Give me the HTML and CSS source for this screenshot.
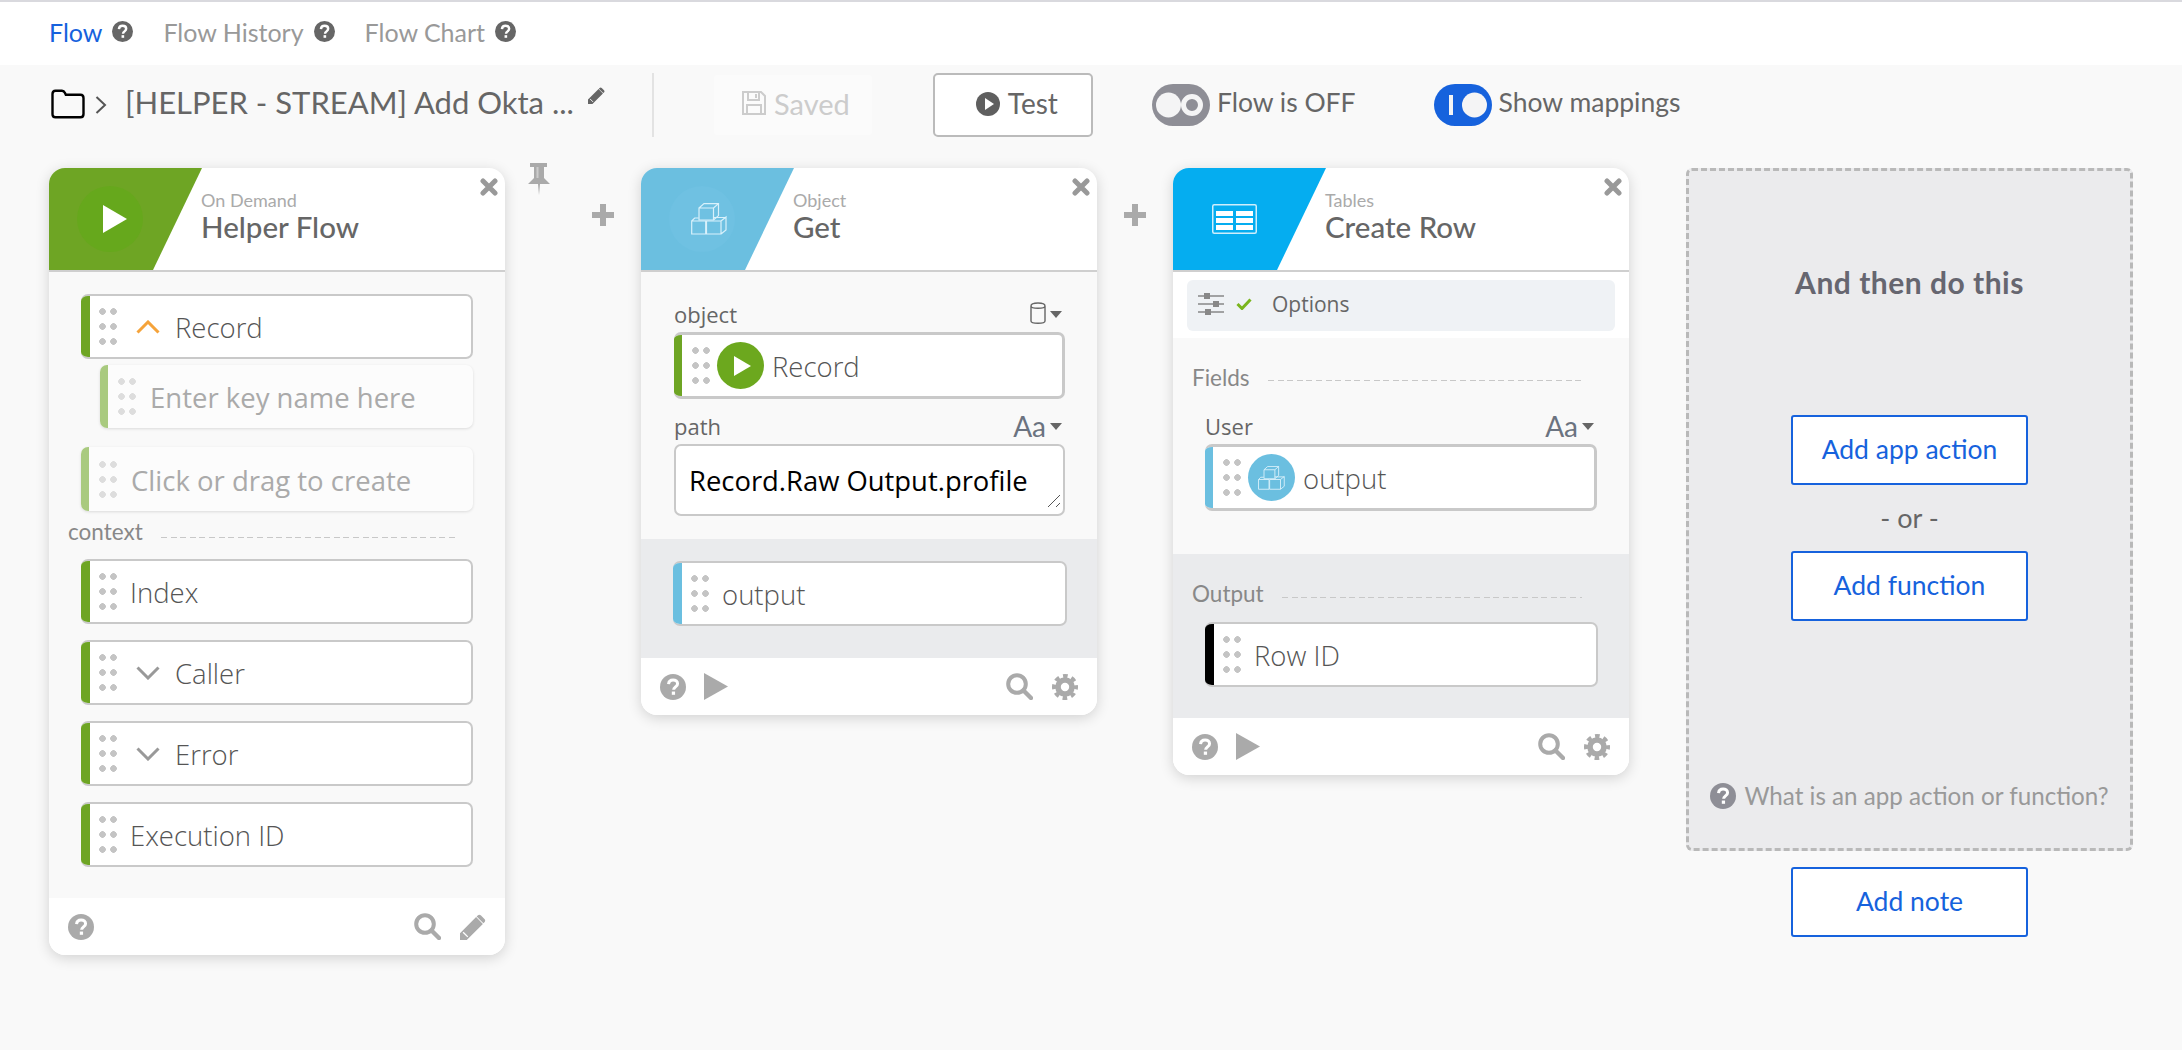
FILE: index.html
```html
<!DOCTYPE html>
<html lang="en">
<head>
<meta charset="UTF-8">
<meta name="viewport" content="width=device-width, initial-scale=1.0">
<title>Flow</title>
<link rel="stylesheet" href="styles.css">
</head>
<body>
<svg class="sprite" xmlns="http://www.w3.org/2000/svg">
    <symbol id="i-help" viewBox="0 0 24 24">
        <circle cx="12" cy="12" r="12" fill="currentColor"/>
        <path d="M7.900 9.300c.2-2.400 1.900-3.800 4.200-3.800 2.400 0 4.100 1.400 4.100 3.400 0 3-3.600 2.900-3.600 5.600" fill="none" stroke="#fff" stroke-width="2.800"/>
        <rect x="10.900" y="16.200" width="3" height="3" fill="#fff"/>
    </symbol>
    <symbol id="i-search" viewBox="0 0 27 27">
        <circle cx="11" cy="11" r="8.800" fill="none" stroke="currentColor" stroke-width="4"/>
        <path d="M17.500 17.500l7.500 7.500" stroke="currentColor" stroke-width="4.400" stroke-linecap="round"/>
    </symbol>
    <symbol id="i-pencil" viewBox="0 0 25 25">
        <path d="M0 25v-6.500L15.500 3l6.500 6.500L6.500 25zM17 1.500c1-1 2.200-1 3.200 0l3.300 3.300c1 1 1 2.200 0 3.200l-1 1-6.500-6.500z" fill="currentColor"/>
        <path d="M3 17.500l4.500 4.500" stroke="#fff" stroke-width="1.300"/>
    </symbol>
    <symbol id="i-gear" viewBox="0 0 26 26">
        <circle cx="13" cy="13" r="7" fill="none" stroke="currentColor" stroke-width="5.600"/>
        <circle cx="13" cy="13" r="11" fill="none" stroke="currentColor" stroke-width="4" stroke-dasharray="4.600 4.040" stroke-dashoffset="2.300"/>
    </symbol>
    <symbol id="i-close" viewBox="0 0 18 18">
        <path d="M3 3l12 12M15 3L3 15" stroke="currentColor" stroke-width="5" stroke-linecap="round"/>
    </symbol>
    <symbol id="i-cubes" viewBox="0 0 36 32">
        <path d="M8 5h14.500v12H8zM8 5l5-4.400h14.500v12l-5 4.400M22.500 5l5-4.400" fill="none" stroke="currentColor" stroke-width="1.200"/>
        <path d="M.7 18h14v13H.7zM15.500 18H30v13H15.500zM30 18l5-4v13l-5 4M.7 18l3-3h4M22.500 14.500H35" fill="none" stroke="currentColor" stroke-width="1.200"/>
    </symbol>
</svg>

<nav class="tabs">
    <a class="tab tab-active">Flow <svg class="tab-help"><use href="#i-help"/></svg></a>
    <a class="tab">Flow History <svg class="tab-help"><use href="#i-help"/></svg></a>
    <a class="tab">Flow Chart <svg class="tab-help"><use href="#i-help"/></svg></a>
</nav>

<header class="toolbar">
    <svg class="folder" viewBox="0 0 34 30"><path d="M1.500 5c0-2 1-3.300 3-3.300h6.500c1.500 0 2.300.8 3 2.300l.8 1.700h14.700c2 0 3 1.300 3 3.300V25c0 2-1 3.300-3 3.300h-25c-2 0-3-1.300-3-3.300z" fill="none" stroke="#000" stroke-width="2.400"/></svg>
    <svg class="crumb" viewBox="0 0 12 20"><path d="M1.500 2l8.500 8-8.500 8" fill="none" stroke="#555" stroke-width="2"/></svg>
    <h1 class="flow-name">[HELPER - STREAM] Add Okta ...</h1>
    <svg class="name-edit"><use href="#i-pencil"/></svg>
    <div class="divider"></div>
    <div class="saved">
        <svg class="floppy" viewBox="0 0 24 24"><path d="M1 1h18l4 4v18H1zM6 1v8h11V1M14 3v4M5 23v-9h14v9" fill="none" stroke="#ccc" stroke-width="2"/></svg>
        Saved
    </div>
    <button class="test-btn">
        <svg class="test-icon" viewBox="0 0 24 24"><circle cx="12" cy="12" r="12" fill="#5f5f5f"/><path d="M9 6l9 6-9 6z" fill="#fff"/></svg>
        Test
    </button>
    <div class="toggle toggle-off">
        <svg class="toggle-pill" viewBox="0 0 58 42"><rect width="58" height="42" rx="21" fill="#8e8e96"/><circle cx="16.500" cy="21" r="12.500" fill="#f4f4f5"/><circle cx="40" cy="21" r="8.500" fill="none" stroke="#f4f4f5" stroke-width="5"/></svg>
        <span>Flow is OFF</span>
    </div>
    <div class="toggle toggle-on">
        <svg class="toggle-pill" viewBox="0 0 58 42"><rect width="58" height="42" rx="21" fill="#1662dd"/><rect x="15" y="11" width="4" height="20" fill="#f4f4f5"/><circle cx="40.500" cy="21" r="12.500" fill="#f4f4f5"/></svg>
        <span>Show mappings</span>
    </div>
</header>

<main class="canvas">
    <!-- trigger card -->
    <section class="card card-trigger">
        <div class="card-head">
            <div class="accent accent-green">
                <span class="accent-disc disc-green">
                    <svg class="accent-play" viewBox="0 0 24 28"><path d="M0 0l24 14L0 28z" fill="#fff"/></svg>
                </span>
            </div>
            <div class="head-text">
                <div class="head-app">On Demand</div>
                <div class="head-title">Helper Flow</div>
            </div>
            <svg class="close"><use href="#i-close"/></svg>
        </div>
        <div class="card-body body-trigger">
            <div class="row"><span class="bar bar-green"></span><span class="grip"></span>
                <svg class="chev chev-up" viewBox="0 0 24 14"><path d="M1.500 12.500L12 2l10.500 10.500" fill="none" stroke="#f5a33a" stroke-width="3"/></svg>
                <span class="row-label">Record</span>
            </div>
            <div class="row row-ghost row-key"><span class="bar bar-lime"></span><span class="grip"></span><span class="row-label">Enter key name here</span></div>
            <div class="row row-ghost row-create"><span class="bar bar-lime"></span><span class="grip"></span><span class="row-label">Click or drag to create</span></div>
            <div class="sect sect-context"><span>context</span><i class="dash"></i></div>
            <div class="row"><span class="bar bar-green"></span><span class="grip"></span><span class="row-label">Index</span></div>
            <div class="row row-next"><span class="bar bar-green"></span><span class="grip"></span>
                <svg class="chev" viewBox="0 0 24 14"><path d="M1.500 1.500L12 12 22.500 1.500" fill="none" stroke="#999" stroke-width="3"/></svg>
                <span class="row-label">Caller</span>
            </div>
            <div class="row row-next"><span class="bar bar-green"></span><span class="grip"></span>
                <svg class="chev" viewBox="0 0 24 14"><path d="M1.500 1.500L12 12 22.500 1.500" fill="none" stroke="#999" stroke-width="3"/></svg>
                <span class="row-label">Error</span>
            </div>
            <div class="row row-next"><span class="bar bar-green"></span><span class="grip"></span><span class="row-label">Execution ID</span></div>
        </div>
        <div class="card-foot">
            <svg class="foot-icon"><use href="#i-help"/></svg>
            <span class="foot-space"></span>
            <svg class="foot-icon foot-search"><use href="#i-search"/></svg>
            <svg class="foot-icon"><use href="#i-pencil"/></svg>
        </div>
    </section>

    <div class="gutter gutter-first">
        <svg class="pin" viewBox="0 0 22 32"><path d="M2 0h17v4h-3v11l6 6H12l-1 11-1-11H0l6-6V4H2z" fill="#aaa"/><path d="M8.500 4h2v11h-2z" fill="#ccc"/></svg>
        <span class="plus"></span>
    </div>

    <!-- object get -->
    <section class="card">
        <div class="card-head">
            <div class="accent accent-sky">
                <span class="accent-disc disc-sky"><svg class="accent-cubes"><use href="#i-cubes"/></svg></span>
            </div>
            <div class="head-text">
                <div class="head-app">Object</div>
                <div class="head-title">Get</div>
            </div>
            <svg class="close"><use href="#i-close"/></svg>
        </div>
        <div class="card-body body-fields">
            <div class="field-head">
                <span>object</span>
                <span class="type-pick">
                    <svg class="db" viewBox="0 0 16 22"><path d="M1 4c0-4 14-4 14 0v15c0 3-14 3-14 0zM1 4c0 3 14 3 14 0" fill="none" stroke="#666" stroke-width="1.400"/></svg>
                    <i class="caret"></i>
                </span>
            </div>
            <div class="row row-mapped"><span class="bar bar-green"></span><span class="grip"></span>
                <span class="token token-green"><svg class="token-play" viewBox="0 0 17 20"><path d="M0 0l17 10L0 20z" fill="#fff"/></svg></span>
                <span class="row-label">Record</span>
            </div>
            <div class="field-head field-next">
                <span>path</span>
                <span class="type-pick"><span class="aa">Aa</span><i class="caret"></i></span>
            </div>
            <div class="textbox">Record.Raw Output.profile
                <svg class="resize" viewBox="0 0 14 14"><path d="M1 13L13 1M9 13l4-4" stroke="#555" stroke-width="1"/></svg>
            </div>
        </div>
        <div class="card-output output-get">
            <div class="row row-wide"><span class="bar bar-sky"></span><span class="grip"></span><span class="row-label">output</span></div>
        </div>
        <div class="card-foot">
            <svg class="foot-icon"><use href="#i-help"/></svg>
            <svg class="foot-play" viewBox="0 0 24 27"><path d="M0 0l24 13.500L0 27z" fill="#aaa"/></svg>
            <span class="foot-space"></span>
            <svg class="foot-icon foot-search"><use href="#i-search"/></svg>
            <svg class="foot-icon"><use href="#i-gear"/></svg>
        </div>
    </section>

    <div class="gutter gutter-second"><span class="plus"></span></div>

    <!-- tables create row -->
    <section class="card">
        <div class="card-head">
            <div class="accent accent-blue">
                <svg class="table-icon" viewBox="0 0 45 30">
                    <rect x=".75" y=".75" width="43.500" height="28.500" rx="1.500" fill="none" stroke="#cfeefc" stroke-width="1.500"/>
                    <path d="M4 7h17v5H4zM24 7h17v5H24zM4 14h17v5H4zM24 14h17v5H24zM4 21h17v5H4zM24 21h17v5H24z" fill="#fff"/>
                </svg>
            </div>
            <div class="head-text">
                <div class="head-app">Tables</div>
                <div class="head-title">Create Row</div>
            </div>
            <svg class="close"><use href="#i-close"/></svg>
        </div>
        <div class="options-wrap">
            <div class="options">
                <svg class="sliders" viewBox="0 0 26 22">
                    <path d="M0 3h26M0 11h26M0 19h26" stroke="#888" stroke-width="1.500"/>
                    <path d="M6 0h6v6H6zM15 8h6v6h-6zM7 16h6v6H7z" fill="#888"/>
                </svg>
                <svg class="check" viewBox="0 0 16 12"><path d="M1.500 6l4.500 4.500L14.500 1.500" fill="none" stroke="#7ab51d" stroke-width="3"/></svg>
                <span>Options</span>
            </div>
        </div>
        <div class="card-body body-table">
            <div class="sect"><span>Fields</span><i class="dash"></i></div>
            <div class="field-head field-user">
                <span>User</span>
                <span class="type-pick"><span class="aa">Aa</span><i class="caret"></i></span>
            </div>
            <div class="row row-mapped"><span class="bar bar-sky"></span><span class="grip"></span>
                <span class="token token-sky"><svg class="token-cubes"><use href="#i-cubes"/></svg></span>
                <span class="row-label">output</span>
            </div>
        </div>
        <div class="card-output output-table">
            <div class="sect"><span>Output</span><i class="dash"></i></div>
            <div class="row row-wide"><span class="bar bar-black"></span><span class="grip"></span><span class="row-label">Row ID</span></div>
        </div>
        <div class="card-foot">
            <svg class="foot-icon"><use href="#i-help"/></svg>
            <svg class="foot-play" viewBox="0 0 24 27"><path d="M0 0l24 13.500L0 27z" fill="#aaa"/></svg>
            <span class="foot-space"></span>
            <svg class="foot-icon foot-search"><use href="#i-search"/></svg>
            <svg class="foot-icon"><use href="#i-gear"/></svg>
        </div>
    </section>

    <!-- next step picker -->
    <aside class="next-col">
        <div class="next-panel">
            <h3>And then do this</h3>
            <button class="add-btn btn-action">Add app action</button>
            <div class="or">- or -</div>
            <button class="add-btn">Add function</button>
            <div class="what"><svg class="what-help"><use href="#i-help"/></svg>What is an app action or function?</div>
        </div>
        <button class="add-btn btn-note">Add note</button>
    </aside>
</main>
</body>
</html>
```

FILE: styles.css
```css
* {
    box-sizing: border-box;
}
body {
    margin: 0;
    height: 1050px;
    overflow: hidden;
    background-color: #f9f9f9;
    font-family: "Lato", "Liberation Sans", sans-serif;
    color: #666;
}
.sprite {
    display: none;
}

/* tabs */
.tabs {
    display: flex;
    align-items: center;
    height: 65px;
    padding: 0 0 4px 49px;
    background-color: #fff;
    border-top: 2px solid #d9d9de;
}
.tab {
    display: flex;
    align-items: center;
    margin-right: 30px;
    font-size: 25px;
    color: #999;
}
.tab-active {
    color: #1662dd;
}
.tab-help {
    width: 21px;
    height: 21px;
    margin-left: 10px;
    color: #666;
}

/* toolbar */
.toolbar {
    display: flex;
    align-items: center;
    height: 85px;
    padding: 0 0 5px 51px;
}
.folder {
    width: 34px;
    height: 30px;
    margin-top: -2px;
}
.crumb {
    width: 12px;
    height: 20px;
    margin-left: 10px;
}
.flow-name {
    margin: -6px 0 0 18px;
    font-size: 31px;
    font-weight: 400;
    color: #666;
    white-space: nowrap;
}
.name-edit {
    width: 17px;
    height: 17px;
    margin: -20px 0 0 14px;
    color: #666;
}
.divider {
    width: 2px;
    height: 64px;
    margin-left: 47px;
    background-color: #e3e3e3;
}
.saved {
    display: flex;
    align-items: center;
    justify-content: center;
    gap: 8px;
    width: 158px;
    height: 60px;
    margin-left: 60px;
    padding: 0 0 4px 6px;
    border-radius: 4px;
    background-color: #fbfbfb;
    font-size: 29px;
    color: #ccc;
}
.floppy {
    width: 24px;
    height: 24px;
}
.test-btn {
    display: flex;
    align-items: center;
    justify-content: center;
    gap: 8px;
    width: 160px;
    height: 64px;
    margin-left: 61px;
    padding: 0 0 4px 8px;
    background-color: #fff;
    border: 2px solid #bbb;
    border-radius: 5px;
    font-family: inherit;
    font-size: 28px;
    color: #666;
}
.test-icon {
    width: 24px;
    height: 24px;
    margin-top: 2px;
}
.toggle {
    display: flex;
    align-items: center;
    gap: 7px;
    font-size: 26.500px;
    color: #666;
}
.toggle span {
    margin-top: -6px;
}
.toggle-off {
    margin-left: 59px;
}
.toggle-on {
    margin-left: 78px;
}
.toggle-pill {
    width: 58px;
    height: 42px;
}

/* canvas */
.canvas {
    display: flex;
    align-items: flex-start;
    padding: 18px 0 0 49px;
}
.card {
    flex: none;
    width: 456px;
    background-color: #fff;
    border-radius: 16px;
    box-shadow: 0 3px 14px rgba(0, 0, 0, 0.16);
    overflow: hidden;
}
.card-head {
    position: relative;
    display: flex;
    height: 104px;
    border-bottom: 2px solid #cfcfcf;
}
.accent {
    display: flex;
    align-items: center;
    flex: none;
    width: 153px;
    height: 102px;
    margin-right: -1px;
    clip-path: polygon(0 0, 100% 0, 104px 100%, 0 100%);
}
.accent-green {
    background-color: #6ea524;
}
.accent-sky {
    background-color: #6bbfe0;
}
.accent-blue {
    background-color: #05adf0;
}
.accent-disc {
    display: flex;
    align-items: center;
    justify-content: center;
    width: 66px;
    height: 66px;
    margin-left: 28px;
    border-radius: 50%;
}
.disc-green {
    background-color: #66a81c;
}
.disc-sky {
    background-color: #6fc1e2;
}
.accent-play {
    width: 24px;
    height: 28px;
    margin-left: 10px;
}
.accent-cubes {
    width: 36px;
    height: 32px;
    margin-left: 14px;
    color: #d9f1fb;
}
.table-icon {
    width: 45px;
    height: 30px;
    margin-left: 39px;
}
.head-text {
    padding-top: 21px;
}
.head-app {
    font-size: 18px;
    line-height: 22px;
    color: #aaa;
}
.head-title {
    margin-top: -1px;
    font-size: 29.500px;
    line-height: 34px;
    font-weight: 500;
    color: #666;
}
.close {
    position: absolute;
    top: 10px;
    right: 7px;
    width: 18px;
    height: 18px;
    color: #999;
}

/* rows */
.row {
    display: flex;
    align-items: center;
    height: 65px;
    background-color: #fff;
    border: 2px solid #c9c9c9;
    border-left: 0;
    border-radius: 7px;
    overflow: hidden;
    font-family: "Open Sans", sans-serif;
    font-weight: 300;
    font-size: 27.500px;
    color: #555;
}
.bar {
    flex: none;
    align-self: stretch;
    width: 9px;
}
.bar-green {
    background-color: #6ea524;
}
.bar-lime {
    background-color: #a9ca7f;
}
.bar-sky {
    background-color: #6bbfe0;
}
.bar-black {
    background-color: #000;
}
.grip {
    flex: none;
    width: 18px;
    height: 37px;
    margin-left: 9px;
    background-image: radial-gradient(circle at 3.5px 3.5px, #c4c4c4 3px, transparent 3.6px);
    background-size: 11px 15px;
}
.row-label {
    margin: 2px 0 0 13px;
    white-space: nowrap;
}
.chev {
    flex: none;
    width: 24px;
    height: 14px;
    margin-left: 19px;
}
.chev + .row-label {
    margin-left: 15px;
}
.row-ghost {
    height: 63px;
    border-width: 0;
    box-shadow: 0 1px 3px rgba(0, 0, 0, 0.12);
    background-color: #fcfcfc;
    font-weight: 400;
    color: #aaa;
}
.row-ghost .bar {
    width: 8px;
}
.row-ghost .grip {
    margin-left: 10px;
    background-image: radial-gradient(circle at 3.5px 3.5px, #ddd 3px, transparent 3.6px);
}
.row-ghost .row-label {
    margin-left: 14px;
}
.row-key {
    margin: 6px 0 0 19px;
}
.row-create {
    height: 64px;
    margin-top: 19px;
}
.row-next {
    margin-top: 16px;
}
.sect {
    display: flex;
    align-items: center;
    height: 26px;
    font-size: 22.500px;
    color: #888;
}
.sect span {
    margin-top: -3px;
}
.dash {
    flex: 1;
    height: 1px;
    margin: 4px 30px 0 18px;
    background-image: repeating-linear-gradient(90deg, #c8c8c8 0 6px, transparent 6px 9.6px);
}

/* card bodies */
.card-body {
    background-color: #f9f9f9;
}
.body-trigger {
    padding: 22px 32px 31px;
}
.sect-context {
    width: 417px;
    height: 32px;
    margin: 8px 0 8px -13px;
}
.sect-context span {
    margin-top: -8px;
}
.body-fields {
    height: 267px;
    padding: 32px 32px 0 33px;
}
.field-head {
    display: flex;
    align-items: center;
    justify-content: space-between;
    height: 28px;
    padding-bottom: 8px;
    font-family: "Open Sans", sans-serif;
    font-size: 22px;
    color: #666;
}
.field-next {
    margin-top: 17px;
}
.type-pick {
    display: flex;
    align-items: center;
    gap: 2px;
    margin-right: 3px;
}
.aa {
    font-family: "Lato", sans-serif;
    font-size: 28px;
    color: #6b7380;
}
.db {
    width: 16px;
    height: 22px;
    margin-top: -2px;
}
.caret {
    width: 0;
    height: 0;
    margin-left: 2px;
    border-top: 7px solid #666;
    border-left: 6.500px solid transparent;
    border-right: 6.500px solid transparent;
}
.row-mapped {
    height: 67px;
    border-width: 3px;
}
.row-mapped .bar {
    width: 8px;
}
.row-mapped .grip {
    margin-left: 10px;
}
.row-mapped .row-label {
    margin-left: 8px;
}
.token {
    display: flex;
    align-items: center;
    justify-content: center;
    flex: none;
    width: 47px;
    height: 47px;
    margin-left: 7px;
    border-radius: 50%;
}
.token-green {
    background-color: #6ca81e;
}
.token-sky {
    background-color: #6bbfe0;
}
.token-play {
    width: 17px;
    height: 20px;
    margin-left: 3px;
}
.token-cubes {
    width: 27px;
    height: 24px;
    color: #d9f1fb;
}
.textbox {
    position: relative;
    height: 72px;
    padding: 16px 0 0 13px;
    background-color: #fff;
    border: 2px solid #c9c9c9;
    border-radius: 7px;
    font-family: "Open Sans", sans-serif;
    font-size: 27.400px;
    line-height: 38px;
    color: #000;
    white-space: nowrap;
}
.resize {
    position: absolute;
    right: 2px;
    bottom: 6px;
    width: 14px;
    height: 14px;
}
.card-output {
    background-color: #eaebed;
}
.output-get {
    height: 119px;
    padding: 22px 30px 0 32px;
}
.output-table {
    height: 164px;
    padding: 28px 31px 0 32px;
}
.output-table .sect {
    margin: 0 -14px 14px -13px;
}

/* tables card */
.options-wrap {
    height: 66px;
    padding: 8px 14px 7px;
    background-color: #fff;
}
.options {
    display: flex;
    align-items: center;
    height: 51px;
    padding: 0 0 4px 11px;
    background-color: #eff2f5;
    border-radius: 6px;
    font-family: "Open Sans", sans-serif;
    font-size: 21px;
    color: #666;
}
.sliders {
    width: 26px;
    height: 22px;
}
.check {
    width: 16px;
    height: 12px;
    margin-left: 12px;
}
.options span {
    margin-left: 20px;
}
.body-table {
    height: 216px;
    padding: 27px 32px 0;
}
.body-table .sect {
    margin: 0 -15px 0 -13px;
}
.body-table .sect span {
    margin-top: -1px;
}
.field-user {
    margin-top: 25px;
}

/* footers */
.card-foot {
    display: flex;
    align-items: center;
    height: 57px;
    padding: 0 19px;
    background-color: #fff;
}
.foot-icon {
    flex: none;
    width: 26px;
    height: 26px;
    color: #aaa;
}
.foot-search {
    width: 27px;
    height: 27px;
    margin-right: 19px;
}
.foot-play {
    width: 24px;
    height: 27px;
    margin-left: 18px;
}
.foot-space {
    flex: 1;
}

/* gutters between the cards */
.gutter {
    position: relative;
    flex: none;
    height: 104px;
}
.gutter-first {
    width: 136px;
}
.gutter-second {
    width: 76px;
}
.plus {
    position: absolute;
    top: 36px;
    right: 27px;
    width: 22px;
    height: 22px;
    background-image: linear-gradient(#aaa, #aaa), linear-gradient(#aaa, #aaa);
    background-size: 22px 6px, 6px 22px;
    background-position: center;
    background-repeat: no-repeat;
    border-radius: 2px;
}
.pin {
    position: absolute;
    top: -5px;
    left: 23px;
    width: 22px;
    height: 32px;
}

/* next step column */
.next-col {
    display: flex;
    flex-direction: column;
    align-items: center;
    flex: none;
    width: 447px;
    margin-left: 57px;
}
.next-panel {
    display: flex;
    flex-direction: column;
    align-items: center;
    width: 447px;
    height: 683px;
    padding-top: 94px;
    background-color: #ebebed;
    border: 3px dashed #b9b9b9;
    border-radius: 6px;
}
.next-panel h3 {
    margin: 0;
    font-size: 30px;
    line-height: 34px;
    font-weight: 700;
    letter-spacing: 0.5px;
    color: #666670;
}
.add-btn {
    flex: none;
    width: 237px;
    height: 70px;
    padding-bottom: 3px;
    background-color: #fff;
    border: 2px solid #1662dd;
    border-radius: 3px;
    font-family: inherit;
    font-size: 26.500px;
    color: #1662dd;
}
.btn-action {
    margin-top: 116px;
}
.or {
    margin: 21px 0;
    font-size: 27px;
    line-height: 24px;
    color: #666;
}
.what {
    display: flex;
    align-items: center;
    margin-top: 160px;
    font-size: 24.200px;
    color: #999;
    white-space: nowrap;
}
.what-help {
    width: 26px;
    height: 26px;
    margin-right: 8px;
    color: #8e8e96;
}
.btn-note {
    margin-top: 16px;
}
```
